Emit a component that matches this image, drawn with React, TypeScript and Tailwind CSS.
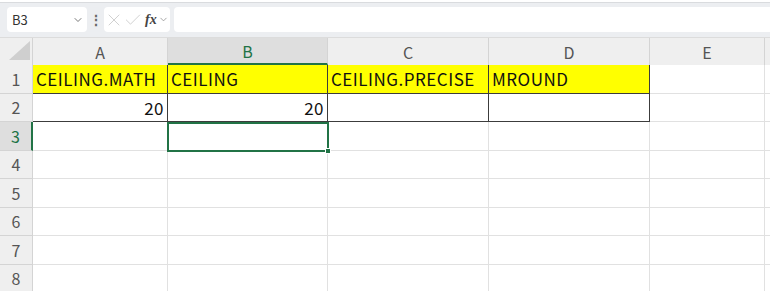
import { X, Check, ChevronDown } from 'lucide-react'

const cols = [
  { label: 'A', w: 135 },
  { label: 'B', w: 160 },
  { label: 'C', w: 161 },
  { label: 'D', w: 161 },
  { label: 'E', w: 115 },
  { label: '', w: 80 },
]

type Cell = { text?: string; align?: 'left' | 'right'; fill?: boolean; boxed?: boolean }

const data: Record<number, Cell[]> = {
  1: [
    { text: 'CEILING.MATH', fill: true, boxed: true },
    { text: 'CEILING', fill: true, boxed: true },
    { text: 'CEILING.PRECISE', fill: true, boxed: true },
    { text: 'MROUND', fill: true, boxed: true },
  ],
  2: [
    { text: '20', align: 'right', boxed: true },
    { text: '20', align: 'right', boxed: true },
    { boxed: true },
    { boxed: true },
  ],
}

const font = { fontFamily: '"Noto Sans CJK JP", "Noto Sans", sans-serif' }

export default function App() {
  const rows = [1, 2, 3, 4, 5, 6, 7, 8]

  return (
    <div className="h-[291px] w-[770px] overflow-hidden bg-white" style={font}>
      {/* formula bar */}
      <div className="h-[2px] bg-white" />
      <div className="flex h-[35px] items-start gap-[4px] border-t border-[#d9dbde] bg-[#eceef1] pl-[7px] pt-[4px]">
        <div className="flex h-[25px] w-[80px] shrink-0 items-center justify-between rounded-[4px] bg-white pl-[5px] pr-[3px] text-[13px] text-[#333]">
          <span>B3</span>
          <ChevronDown size={12} strokeWidth={1.6} className="text-[#555]" />
        </div>
        <div className="flex h-[25px] w-[9px] shrink-0 items-center justify-center text-[14px] font-bold text-[#666]">⋮</div>
        <div className="flex h-[25px] w-[66px] shrink-0 items-center rounded-[4px] bg-white text-[#c8c8c8]">
          <X size={20} strokeWidth={1} />
          <Check size={20} strokeWidth={1} className="-ml-[1px]" />
          <span className="ml-[2px] text-[14px] font-bold italic text-[#444]" style={{ fontFamily: '"Liberation Serif", serif' }}>
            fx
          </span>
          <ChevronDown size={11} strokeWidth={1.6} className="ml-[1px] text-[#888]" />
        </div>
        <div className="h-[25px] flex-1 rounded-l-[4px] bg-white" />
      </div>

      {/* sheet */}
      <div className="relative">
        {/* column headers */}
        <div className="flex h-[28px] border-t border-[#dcdcdc] bg-[#efefef]">
          <div className="relative w-[33px] shrink-0 border-r border-[#d4d4d4]">
            <svg className="absolute left-0 top-0" width="33" height="28" viewBox="0 0 33 28">
              <polygon points="9,22 30,22 30,3" fill="#cfcfcf" />
            </svg>
          </div>
          {cols.map((c) => (
            <div
              key={c.label || 'f'}
              style={{ width: c.w }}
              className={`flex shrink-0 items-center justify-center border-r text-[16px] ${
                c.label === 'B'
                  ? 'border-b-2 border-r-[#d4d4d4] border-b-[#217346] bg-[#dedede] text-[#217346]'
                  : 'border-[#d4d4d4] text-[#555]'
              }`}
            >
              {c.label}
            </div>
          ))}
        </div>

        {rows.map((r) => (
          <div key={r} className="flex h-[28.5px]">
            <div
              className={`flex w-[33px] shrink-0 items-center justify-center border-b text-[16px] ${
                r === 3
                  ? 'border-r-2 border-b-[#d4d4d4] border-r-[#217346] bg-[#dedede] text-[#217346]'
                  : 'border-r border-[#d4d4d4] bg-[#efefef] text-[#555]'
              }`}
            >
              {r}
            </div>
            {cols.map((c, i) => {
              const cell = data[r]?.[i]
              return (
                <div
                  key={i}
                  style={{ width: c.w }}
                  className={`flex shrink-0 items-center overflow-hidden whitespace-nowrap border-b border-r px-[3px] text-[17px] tracking-[0.5px] text-[#111] ${
                    cell?.boxed ? 'border-[#3c3c3c]' : 'border-[#e1e1e1]'
                  } ${cell?.fill ? 'bg-[#ffff00]' : ''} ${cell?.align === 'right' ? 'justify-end' : ''}`}
                >
                  {cell?.text}
                </div>
              )
            })}
          </div>
        ))}

        {/* active cell B3 */}
        <div className="pointer-events-none absolute left-[167px] top-[85px] h-[30px] w-[162px] border-2 border-[#217346]">
          <div className="absolute -bottom-[4px] -right-[4px] h-[6px] w-[6px] border border-white bg-[#217346]" />
        </div>
      </div>
    </div>
  )
}
